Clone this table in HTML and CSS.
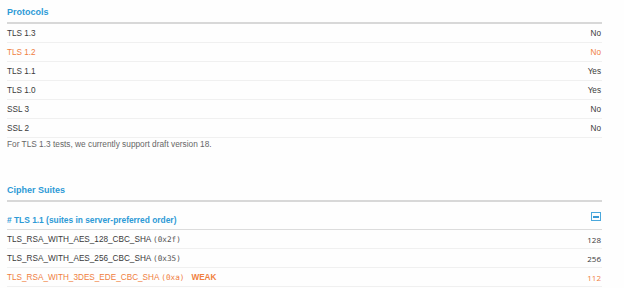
FILE: index.html
```html
<!DOCTYPE html>
<html>
<head>
<meta charset="utf-8">
<link rel="stylesheet" href="styles.css">
</head>
<body>
<div class="page">
  <section class="block">
    <h2 class="heading">Protocols</h2>
    <div class="row"><span class="name">TLS 1.3</span><span class="val">No</span></div>
    <div class="row warn"><span class="name">TLS 1.2</span><span class="val">No</span></div>
    <div class="row"><span class="name">TLS 1.1</span><span class="val">Yes</span></div>
    <div class="row"><span class="name">TLS 1.0</span><span class="val">Yes</span></div>
    <div class="row"><span class="name">SSL 3</span><span class="val">No</span></div>
    <div class="row"><span class="name">SSL 2</span><span class="val">No</span></div>
    <p class="note">For TLS 1.3 tests, we currently support draft version 18.</p>
  </section>
  <section class="block cipher">
    <h2 class="heading">Cipher Suites</h2>
    <div class="subhead">
      <span class="subtitle"># TLS 1.1 (suites in server-preferred order)</span>
      <span class="toggle"><span class="bar"></span></span>
    </div>
    <div class="row"><span class="name">TLS_RSA_WITH_AES_128_CBC_SHA <code class="hex">(0x2f)</code></span><span class="val num">128</span></div>
    <div class="row"><span class="name">TLS_RSA_WITH_AES_256_CBC_SHA <code class="hex">(0x35)</code></span><span class="val num">256</span></div>
    <div class="row warn"><span class="name">TLS_RSA_WITH_3DES_EDE_CBC_SHA <code class="hex">(0xa)</code><b class="weak">WEAK</b></span><span class="val num">112</span></div>
  </section>
</div>
</body>
</html>
```
FILE: styles.css
```css
html, body {
  margin: 0;
  padding: 0;
  background: #fefefe;
}
body {
  font-family: "Liberation Sans", Arial, sans-serif;
  color: #3a3a3a;
}
.page {
  width: 595px;
  padding-left: 7px;
}
.heading {
  margin: 0;
  padding: 6px 0 4px;
  font-size: 9px;
  line-height: 12px;
  font-weight: bold;
  color: #2d9ad6;
  border-bottom: 2px solid #d8d8d8;
}
.row {
  display: flex;
  justify-content: space-between;
  align-items: center;
  height: 18px;
  border-bottom: 1px solid #f0f0f0;
  font-size: 8.2px;
}
.val {
  padding-right: 1px;
}
.warn {
  color: #f0803e;
}
.note {
  margin: 0;
  font-size: 8.3px;
  line-height: 12px;
  color: #666;
}
.cipher {
  margin-top: 28px;
}
.subhead {
  display: flex;
  justify-content: space-between;
  align-items: center;
  height: 28px;
  box-sizing: border-box;
  padding-top: 2px;
  border-bottom: 1px solid #dcdcdc;
}
.subtitle {
  font-size: 8.4px;
  font-weight: bold;
  color: #2d9ad6;
  padding-top: 6px;
}
.toggle {
  width: 8px;
  height: 7px;
  border: 1px solid #4aa8dc;
  display: flex;
  align-items: center;
  justify-content: center;
  margin-right: 1px;
}
.bar {
  width: 6px;
  height: 2px;
  background: #3a9ad4;
}
.hex {
  font-family: "DejaVu Sans Mono", monospace;
  font-size: 7.7px;
  color: #555;
}
.warn .hex {
  color: #f0803e;
}
.weak {
  margin-left: 7px;
  font-weight: bold;
}
.num {
  font-family: "Open Sans", sans-serif;
  font-size: 8px;
}
```
